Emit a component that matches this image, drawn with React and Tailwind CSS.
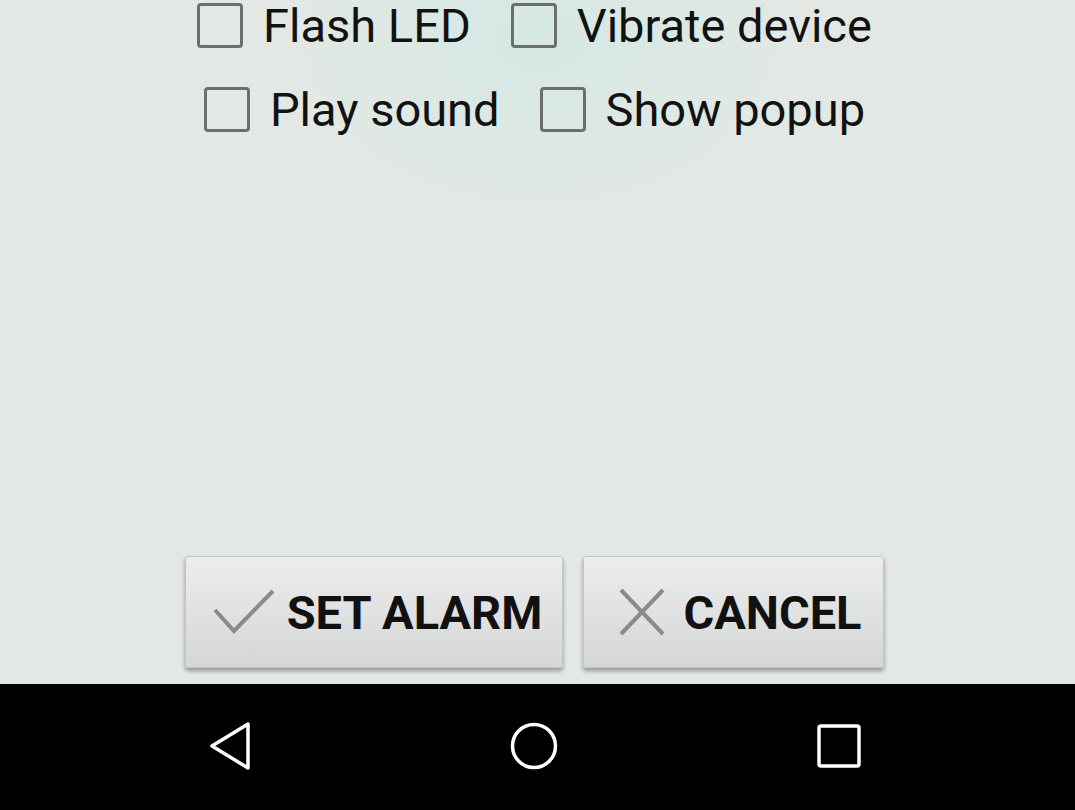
import React from 'react';

const font = { fontFamily: 'Roboto, "Liberation Sans", sans-serif' };

const Option = ({ label }) => (
  <div className="flex items-center gap-[20px]">
    <div className="w-[46px] h-[45px] border-[3px] border-[#6a6e6c] rounded-[4px] shrink-0" />
    <span className="text-[47px] leading-none text-[#121212]">{label}</span>
  </div>
);

const CheckIcon = () => (
  <svg width="62" height="48" viewBox="0 0 62 48" fill="none">
    <polyline points="2,22 21,43 60,3" stroke="#8a8a8a" strokeWidth="4" />
  </svg>
);

const CrossIcon = () => (
  <svg width="46" height="48" viewBox="0 0 46 48" fill="none">
    <line x1="2" y1="2" x2="44" y2="46" stroke="#8a8a8a" strokeWidth="4" />
    <line x1="44" y1="2" x2="2" y2="46" stroke="#8a8a8a" strokeWidth="4" />
  </svg>
);

const ActionButton = ({ icon, label, width, gap, pad }) => (
  <button
    className={`${width} ${pad} h-[112px] flex items-center justify-center ${gap} rounded-[3px] border border-[#c4c6c5] bg-gradient-to-b from-[#ededed] to-[#d5d6d6] shadow-[0_3px_4px_rgba(0,0,0,0.35)]`}
  >
    {icon}
    <span className="text-[47px] font-bold leading-none text-[#111]">{label}</span>
  </button>
);

export default function App() {
  return (
    <div className="w-[1075px] h-[810px] flex flex-col overflow-hidden" style={font}>
      <div className="flex-1 flex flex-col pr-[6px] bg-[#e3e8e4] bg-[radial-gradient(ellipse_260px_180px_at_540px_40px,#d5e8e4_0%,#e3e8e4_100%)]">
        <div className="flex flex-col pt-[2px] gap-[37px]">
          <div className="flex justify-center gap-[40px]">
            <Option label="Flash LED" />
            <Option label="Vibrate device" />
          </div>
          <div className="flex justify-center gap-[40px]">
            <Option label="Play sound" />
            <Option label="Show popup" />
          </div>
        </div>
        <div className="mt-auto mb-[16px] flex justify-center gap-[20px]">
          <ActionButton icon={<CheckIcon />} label="SET ALARM" width="w-[378px]" gap="gap-[12px]" pad="pl-[7px]" />
          <ActionButton icon={<CrossIcon />} label="CANCEL" width="w-[301px]" gap="gap-[18px]" pad="pl-[14px]" />
        </div>
      </div>
      <div className="h-[126px] bg-black flex items-center justify-center gap-[257px] pr-[6px] pb-[2px]">
        <svg width="44" height="50" viewBox="0 0 44 50" fill="none">
          <path d="M40 3 L40 47 L4 25 Z" stroke="white" strokeWidth="3.5" strokeLinejoin="round" />
        </svg>
        <svg width="50" height="50" viewBox="0 0 50 50" fill="none">
          <circle cx="25" cy="25" r="21.5" stroke="white" strokeWidth="3.5" />
        </svg>
        <svg width="46" height="46" viewBox="0 0 46 46" fill="none">
          <rect x="3" y="3" width="40" height="40" rx="2" stroke="white" strokeWidth="3.5" />
        </svg>
      </div>
    </div>
  );
}
